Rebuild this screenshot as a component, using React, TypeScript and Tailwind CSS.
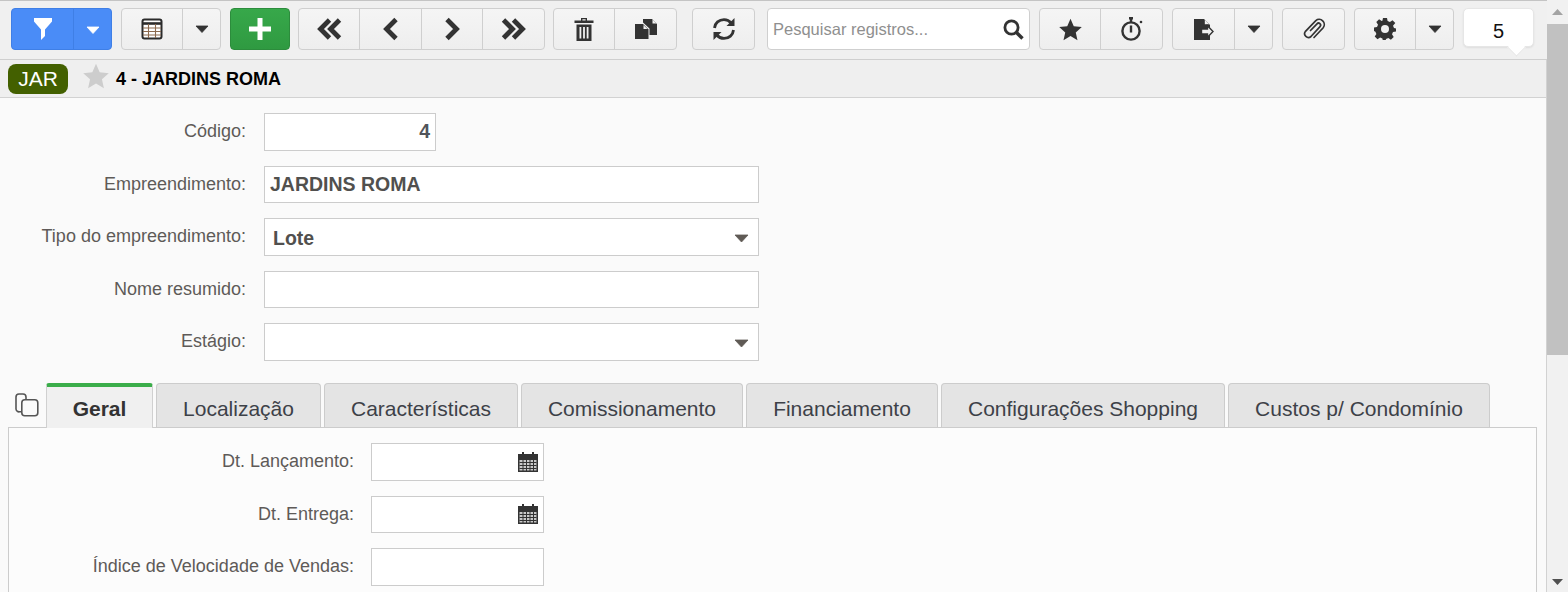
import React from "react";

const Caret = ({ white = false }: { white?: boolean }) => (
  <svg width="14" height="8" viewBox="0 0 14 8" className={white ? "text-white" : "text-[#333333]"}>
    <path d="M1 1h12L7 7.5z" fill="currentColor" stroke="currentColor" strokeWidth="0.8" strokeLinejoin="round" />
  </svg>
);

const FilterIcon = () => (
  <svg width="20" height="22" viewBox="0 0 20 22">
    <path d="M1 0h18v3.5L12 11.5V18l-4 4V11.5L1 3.5z" fill="#ffffff" />
  </svg>
);

const TableIcon = () => (
  <svg width="22" height="22" viewBox="0 0 22 22" fill="none">
    <rect x="1.5" y="1.5" width="19" height="19" rx="2" fill="#fff" stroke="#2b2b2b" strokeWidth="2" />
    <path d="M1.5 5.5h19" stroke="#2b2b2b" strokeWidth="2.6" />
    <path d="M2 10h18M2 13.5h18M2 17h18M7.5 6v14M14.5 6v14" stroke="#8c6a4e" strokeWidth="1.1" />
  </svg>
);

const PlusIcon = () => (
  <svg width="22" height="22" viewBox="0 0 22 22">
    <path d="M8.5 0h5v8.5H22v5h-8.5V22h-5v-8.5H0v-5h8.5z" fill="#ffffff" />
  </svg>
);

const Chevrons = ({ dir, double }: { dir: "left" | "right"; double?: boolean }) => (
  <svg width="26" height="24" viewBox="0 0 26 24" fill="none" stroke="#333333" strokeWidth="4.8">
    {dir === "left" ? (
      double ? (
        <>
          <path d="M13.5 3 4.5 12l9 9" />
          <path d="M23.5 3 14.5 12l9 9" />
        </>
      ) : (
        <path d="M18 2.5 8.5 12l9.5 9.5" />
      )
    ) : double ? (
      <>
        <path d="M2.5 3l9 9-9 9" />
        <path d="M12.5 3l9 9-9 9" />
      </>
    ) : (
      <path d="M8 2.5l9.5 9.5L8 21.5" />
    )}
  </svg>
);

const TrashIcon = () => (
  <svg width="20" height="23" viewBox="0 0 20 23" fill="#333333">
    <path d="M7 0h6v2.5h6.5V5H.5V2.5H7zM8.4 1.2v1.3h3.2V1.2z" fillRule="evenodd" />
    <path d="M2.5 6.5h15V23h-15zM5.5 9v11.5h1.8V9zM9.1 9v11.5h1.8V9zM12.7 9v11.5h1.8V9z" fillRule="evenodd" />
  </svg>
);

const CopyIcon = () => (
  <svg width="22" height="20" viewBox="0 0 22 20">
    <path d="M8 0h9l5 5v11h-7.5V9.5L8 3.5z" fill="#333333" />
    <path d="M17.5 0.5l4 4h-4z" fill="#f1f1f1" />
    <path d="M0 5h8l5.5 5.5V20H0z" fill="#333333" />
    <path d="M8.5 6l4 4h-4z" fill="#f1f1f1" />
  </svg>
);

const RefreshIcon = () => (
  <svg width="24" height="24" viewBox="0 0 24 24" fill="none" stroke="#333333" strokeWidth="2.8">
    <path d="M2.5 11C3 6 7 2.6 12 2.6c3 0 5.4 1.2 7.2 3.4" />
    <path d="M21.5 13C21 18 17 21.4 12 21.4c-3 0-5.4-1.2-7.2-3.4" />
    <path d="M22.5 1V9H14.5z" fill="#333333" stroke="none" />
    <path d="M1.5 23V15H9.5z" fill="#333333" stroke="none" />
  </svg>
);

const SearchIcon = () => (
  <svg width="21" height="21" viewBox="0 0 21 21" fill="none" stroke="#333333">
    <circle cx="8.5" cy="8.5" r="6.6" strokeWidth="2.8" />
    <path d="M13.5 13.5 19.5 19.5" strokeWidth="3.4" />
  </svg>
);

const StarIcon = ({ size, color }: { size: number; color: string }) => (
  <svg width={size} height={size} viewBox="0 0 24 24">
    <path d="M12 0.8l3.4 7.7 8.4.9-6.3 5.6 1.8 8.2L12 18.9l-7.3 4.3 1.8-8.2L.2 9.4l8.4-.9z" fill={color} />
  </svg>
);

const TimerIcon = () => (
  <svg width="22" height="24" viewBox="0 0 22 24" fill="none" stroke="#333333">
    <circle cx="10" cy="14" r="8.6" strokeWidth="2.4" />
    <path d="M8 1.2h4M10 1.2v4" strokeWidth="2.4" />
    <path d="M10 8.5v7" strokeWidth="2.4" />
    <circle cx="20" cy="5" r="1.3" fill="#333333" stroke="none" />
  </svg>
);

const ExportIcon = () => (
  <svg width="20" height="21" viewBox="0 0 20 21">
    <path d="M0 0h10l6 6v15H0z" fill="#333333" />
    <path d="M10.8 .8l4.4 4.4h-4.4z" fill="#f1f1f1" />
    <path d="M7.5 10h6V6.8l5.5 5.7-5.5 5.7V15h-6z" fill="#f1f1f1" stroke="#333333" strokeWidth="1.4" />
  </svg>
);

const ClipIcon = () => (
  <svg width="24" height="24" viewBox="0 0 24 24" fill="none" stroke="#333333" strokeWidth="1.7" strokeLinecap="round">
    <path d="M8.5 13.5 15 6.8a2 2 0 0 1 3 2.8L9 19.5a3.8 3.8 0 0 1-5.5-5.2L13.8 3.6a5.2 5.2 0 0 1 7.4 7.2L12 20.5" />
  </svg>
);

const GearIcon = () => (
  <svg width="22" height="22" viewBox="0 0 22 22">
    <path
      d="M9 0h4l.6 3 2.3 1 2.6-1.7 2.8 2.8L19 7.7l1 2.3 2 .5v3l-3 .5-1 2.3 1.7 2.6-2.8 2.8-2.6-1.7-2.3 1-.6 2.5H9l-.6-3-2.3-1-2.6 1.7-2.8-2.8L2.4 16l-1-2.3L0 13V9.6l3-.6 1-2.3L2.3 4.1l2.8-2.8 2.6 1.7 .7-.3z"
      fill="#333333"
    />
    <circle cx="11" cy="11" r="4" fill="#f1f1f1" />
  </svg>
);

const CalendarIcon = () => (
  <svg width="20" height="20" viewBox="0 0 20 20">
    <path d="M0 2h4V0h2v2h8V0h2v2h4v18H0z" fill="#333333" />
    <path d="M1.5 8h17v10.5h-17z" fill="#c9c9c9" />
    <path d="M1.5 10.5h17M1.5 13.5h17M1.5 16.5h17M5 8v11M8.5 8v11M12 8v11M15.5 8v11" stroke="#333333" strokeWidth="1" />
  </svg>
);

const CopyTabsIcon = () => (
  <svg width="24" height="24" viewBox="0 0 24 24" fill="none" stroke="#555555" strokeWidth="1.6">
    <rect x="6.8" y="6.8" width="16" height="16" rx="3" />
    <path d="M6.8 18.8H4.5A3 3 0 0 1 1 16V4a3 3 0 0 1 3-3h4a3 3 0 0 1 3 3v2.8" />
  </svg>
);

const SelectCaret = () => (
  <svg width="15" height="9" viewBox="0 0 15 9">
    <path d="M1 1h13L7.5 8z" fill="#5f5a55" stroke="#5f5a55" strokeWidth="0.8" strokeLinejoin="round" />
  </svg>
);

const Seg = ({ w, children, first }: { w: string; children?: React.ReactNode; first?: boolean }) => (
  <div className={`flex items-center justify-center h-full ${w} ${first ? "" : "border-l border-[#cfcfcf]"}`}>
    {children}
  </div>
);

const Group = ({ children, className = "" }: { children: React.ReactNode; className?: string }) => (
  <div className={`flex h-[42px] rounded-[4px] border border-[#cfcfcf] bg-gradient-to-b from-[#f5f5f5] to-[#eeeeee] ${className}`}>
    {children}
  </div>
);

// labels sit a pixel above centre on the 38px rows
const Label = ({ text, w, lift }: { text: string; w: string; lift?: boolean }) => (
  <label className={`${w} shrink-0 text-right text-[18px] text-[#5e5a58] ${lift ? "pb-[2px]" : ""}`}>{text}</label>
);

const Row = ({ label, mt, h, w, children }: { label: string; mt: string; h: string; w: string; children?: React.ReactNode }) => (
  <div className={`flex items-center ${mt}`}>
    <Label text={label} w="w-[246px]" lift={h === "h-[38px]"} />
    <div className={`ml-[18px] flex items-center bg-white border border-[#cccccc] ${h} ${w}`}>{children}</div>
  </div>
);

const tabs = [
  { name: "Localização", w: "w-[165px]" },
  { name: "Características", w: "w-[194px]" },
  { name: "Comissionamento", w: "w-[222px]" },
  { name: "Financiamento", w: "w-[192px]" },
  { name: "Configurações Shopping", w: "w-[284px]" },
  { name: "Custos p/ Condomínio", w: "w-[262px]" },
];

const DateRow = ({ label, mt, h, icon }: { label: string; mt: string; h: string; icon?: boolean }) => (
  <div className={`flex items-center ${mt}`}>
    <Label text={label} w="w-[345px]" lift={h === "h-[38px]"} />
    <div className={`ml-[17px] flex items-center justify-end pr-[5px] w-[173px] bg-white border border-[#cccccc] ${h} ${h === "h-[37px]" ? "pb-[2px]" : ""}`}>
      {icon && <CalendarIcon />}
    </div>
  </div>
);

export default function App() {
  return (
    <div className="flex w-[1568px] h-[592px] overflow-hidden bg-[#f0f0f0] font-['Liberation_Sans',Arial,sans-serif]">
      <div className="flex flex-col w-[1547px] shrink-0">
        {/* toolbar */}
        <div className="flex items-start h-[60px] shrink-0 pt-[8px] pl-[11px] border-b border-[#cfcfcf] relative before:absolute before:left-0 before:top-0 before:h-px before:w-full before:bg-[#c4c4c4]">
          <div className="flex h-[42px] w-[101px] rounded-[4px] border border-[#3f7fe6] bg-[#4a8cf7]">
            <div className="flex items-center justify-center w-[62px] h-full border-r border-[#3f7fe6]">
              <FilterIcon />
            </div>
            <div className="flex flex-1 items-center justify-center pt-[2px]">
              <Caret white />
            </div>
          </div>
          <Group className="ml-[9px] w-[100px]">
            <Seg w="w-[60px]" first><TableIcon /></Seg>
            <Seg w="flex-1"><Caret /></Seg>
          </Group>
          <div className="ml-[9px] flex items-center justify-center w-[60px] h-[42px] rounded-[4px] border border-[#2c8c3c] bg-gradient-to-b from-[#37a84a] to-[#2f9a41]">
            <PlusIcon />
          </div>
          <Group className="ml-[8px] w-[247px]">
            <Seg w="w-[60px]" first><Chevrons dir="left" double /></Seg>
            <Seg w="w-[62px]"><Chevrons dir="left" /></Seg>
            <Seg w="w-[61px]"><Chevrons dir="right" /></Seg>
            <Seg w="flex-1"><Chevrons dir="right" double /></Seg>
          </Group>
          <Group className="ml-[8px] w-[124px]">
            <Seg w="w-[60px]" first><TrashIcon /></Seg>
            <Seg w="flex-1"><CopyIcon /></Seg>
          </Group>
          <Group className="ml-[15px] w-[63px] items-center justify-center">
            <RefreshIcon />
          </Group>
          <div className="ml-[12px] flex items-center w-[263px] h-[42px] rounded-[4px] border border-[#cfcfcf] bg-white pl-[5px] pr-[5px]">
            <input
              readOnly
              placeholder="Pesquisar registros..."
              className="flex-1 min-w-0 bg-transparent outline-none text-[16.5px] placeholder:text-[#8f8f8f]"
            />
            <SearchIcon />
          </div>
          <Group className="ml-[9px] w-[124px]">
            <Seg w="w-[60px]" first><StarIcon size={23} color="#333333" /></Seg>
            <Seg w="flex-1"><TimerIcon /></Seg>
          </Group>
          <Group className="ml-[9px] w-[101px]">
            <Seg w="w-[61px]" first><ExportIcon /></Seg>
            <Seg w="flex-1"><Caret /></Seg>
          </Group>
          <Group className="ml-[9px] w-[63px] items-center justify-center">
            <ClipIcon />
          </Group>
          <Group className="ml-[9px] w-[100px]">
            <Seg w="w-[60px]" first><GearIcon /></Seg>
            <Seg w="flex-1"><Caret /></Seg>
          </Group>
          <div className="ml-[9px] relative flex items-center justify-center w-[71px] h-[39px] rounded-[5px] bg-white border border-[#e6e6e6] pt-[6px] text-[20px] text-[#111111] shadow-[0_1px_2px_rgba(0,0,0,0.08)]">
            5
            <div className="absolute left-[46px] top-[32px] w-[13px] h-[13px] rotate-45 bg-white border-r border-b border-[#e6e6e6]" />
          </div>
        </div>

        {/* title */}
        <div className="flex items-center h-[38px] shrink-0 bg-[#efefef] border-b border-r border-[#d2d2d2] pl-[8px]">
          <div className="flex items-center justify-center w-[60px] h-[30px] rounded-[8px] bg-[#436000] text-white text-[21px]">JAR</div>
          <div className="ml-[15px] mb-[6px]"><StarIcon size={26} color="#cdcdcd" /></div>
          <div className="ml-[7px] pt-px text-[18px] font-bold text-black">4 - JARDINS ROMA</div>
        </div>

        {/* form */}
        <div className="flex-1 min-h-0 bg-[#fafafa] border-r border-[#d2d2d2] pt-[15px]">
          <Row label="Código:" mt="mt-0" h="h-[38px]" w="w-[172px]">
            <span className="w-full text-right pr-[5px] text-[19.5px] font-bold text-[#51545a]">4</span>
          </Row>
          <Row label="Empreendimento:" mt="mt-[15px]" h="h-[37px]" w="w-[495px]">
            <span className="pl-[5px] text-[19.5px] font-bold text-[#51504e]">JARDINS ROMA</span>
          </Row>
          <Row label="Tipo do empreendimento:" mt="mt-[15px]" h="h-[38px]" w="w-[495px]">
            <span className="pl-[8px] pt-[3px] flex-1 text-[19.5px] font-bold text-[#51504e]">Lote</span>
            <span className="pr-[9px] pt-[3px]"><SelectCaret /></span>
          </Row>
          <Row label="Nome resumido:" mt="mt-[15px]" h="h-[37px]" w="w-[495px]" />
          <Row label="Estágio:" mt="mt-[15px]" h="h-[38px]" w="w-[495px]">
            <span className="flex-1" />
            <span className="pr-[9px] pt-[3px]"><SelectCaret /></span>
          </Row>

          {/* tabs */}
          <div className="relative z-10 flex items-end h-[44px] mt-[23px] pl-[15px] -mb-px">
            <div className="mb-[11px] w-[24px] shrink-0"><CopyTabsIcon /></div>
            <div className="ml-[7px] flex items-center justify-center w-[107px] h-[45px] pt-[2px] bg-[#f0f0f0] border-t-[4px] border-x border-x-[#d0d0d0] border-t-[#3bad4a] rounded-t-[3px] text-[21px] font-bold text-[#333333]">
              Geral
            </div>
            {tabs.map((tab) => (
              <div
                key={tab.name}
                className={`flex items-center justify-center h-[44px] mb-px ml-[3px] pt-[6px] ${tab.w} bg-[#e4e4e4] border-t border-x border-[#cccccc] rounded-t-[4px] text-[21px] text-[#3d4148]`}
              >
                {tab.name}
              </div>
            ))}
          </div>
          <div className="ml-[8px] w-[1529px] h-[300px] bg-[#fcfcfc] border border-[#cccccc] pt-[15px]">
            <DateRow label="Dt. Lançamento:" mt="mt-0" h="h-[38px]" icon />
            <DateRow label="Dt. Entrega:" mt="mt-[15px]" h="h-[37px]" icon />
            <DateRow label="Índice de Velocidade de Vendas:" mt="mt-[15px]" h="h-[38px]" />
          </div>
        </div>
      </div>

      {/* scrollbar */}
      <div className="flex flex-col flex-1 bg-[#f1f1f1]">
        <div className="flex items-start justify-center h-[24px] pt-[9px]">
          <svg width="11" height="6" viewBox="0 0 11 6"><path d="M5.5 0 11 6H0z" fill="#a3a3a3" /></svg>
        </div>
        <div className="h-[331px] bg-[#c1c1c1]" />
        <div className="mt-auto flex justify-center pb-[7px]">
          <svg width="11" height="6" viewBox="0 0 11 6"><path d="M0 0h11L5.5 6z" fill="#505050" /></svg>
        </div>
      </div>
    </div>
  );
}
